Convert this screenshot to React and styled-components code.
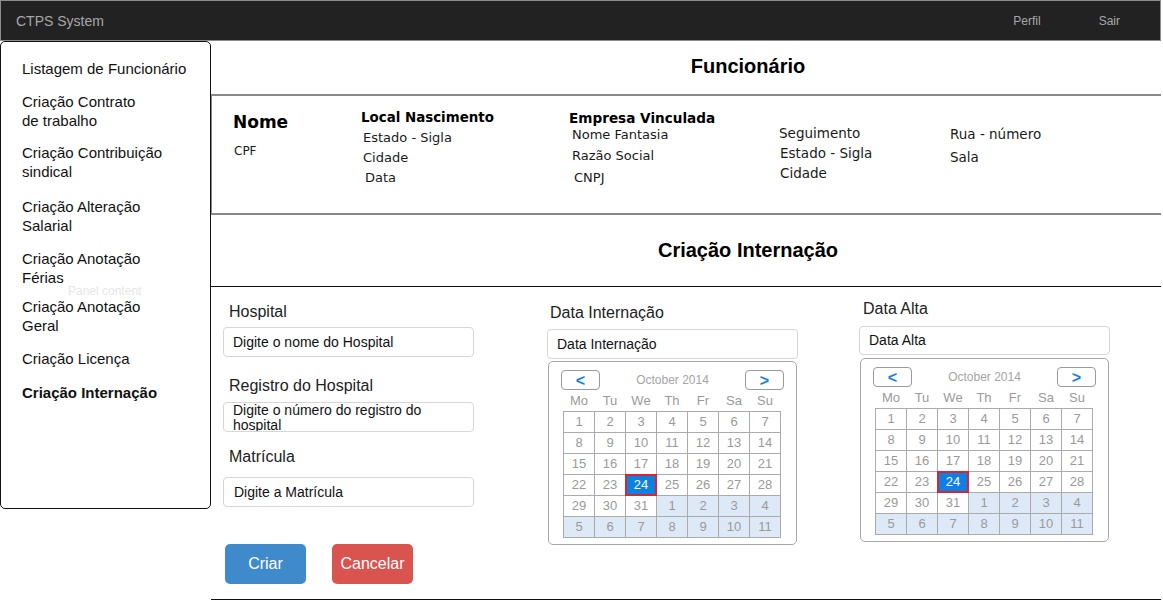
import styled, { createGlobalStyle } from 'styled-components';

const GlobalStyle = createGlobalStyle`
  html, body {
    margin: 0;
    padding: 0;
    background: #fff;
  }
  body {
    font-family: "Liberation Sans", Arial, sans-serif;
    color: #111;
  }
  * {
    box-sizing: border-box;
  }
`;

const menuItems = [
  { lines: ['Listagem de Funcionário'], gap: 0 },
  { lines: ['Criação Contrato', 'de trabalho'], gap: 14 },
  { lines: ['Criação Contribuição', 'sindical'], gap: 13 },
  { lines: ['Criação Alteração', 'Salarial'], gap: 16 },
  { lines: ['Criação Anotação', 'Férias'], gap: 14 },
  { lines: ['Criação Anotação', 'Geral'], gap: 10 },
  { lines: ['Criação Licença'], gap: 14 },
  { lines: ['Criação Internação'], gap: 15, active: true },
];

const buildDays = () => {
  const days = [];
  for (let d = 1; d <= 31; d++) days.push({ day: d, next: false });
  for (let d = 1; d <= 11; d++) days.push({ day: d, next: true });
  return days;
};

const Calendar = ({ mt }) => (
  <CalendarBox $mt={mt}>
    <CalendarHead>
      <NavButton>&lt;</NavButton>
      <MonthLabel>October 2014</MonthLabel>
      <NavButton>&gt;</NavButton>
    </CalendarHead>
    <WeekRow>
      {['Mo', 'Tu', 'We', 'Th', 'Fr', 'Sa', 'Su'].map((w) => (
        <span key={w}>{w}</span>
      ))}
    </WeekRow>
    <DayGrid>
      {buildDays().map((d, i) => (
        <DayCell key={i} $next={d.next} $selected={!d.next && d.day === 24}>
          {d.day}
        </DayCell>
      ))}
    </DayGrid>
  </CalendarBox>
);

const App = () => {
  return (
    <>
      <GlobalStyle />
      <Page>
        <TopBar>
          <Brand>CTPS System</Brand>
          <NavLinks>
            <NavLink>Perfil</NavLink>
            <NavLink>Sair</NavLink>
          </NavLinks>
        </TopBar>
        <Body>
          <Sidebar>
            {menuItems.map((item, i) => (
              <MenuItem key={i} $gap={item.gap} $active={item.active}>
                {item.lines.map((l, j) => (
                  <div key={j}>{l}</div>
                ))}
              </MenuItem>
            ))}
            <GhostText>Panel content</GhostText>
          </Sidebar>
          <Main>
            <SectionTitle $h={53} $pb={3}>Funcionário</SectionTitle>
            <InfoSection>
              <InfoColumn $w={128} $pt={16}>
                <BigName>Nome</BigName>
                <InfoLine $size={12} $mt={9} $pl={1}>CPF</InfoLine>
              </InfoColumn>
              <InfoColumn $w={208} $pt={12}>
                <InfoHeading $size={13.4}>Local Nascimento</InfoHeading>
                <InfoLine $pl={2}>Estado - Sigla</InfoLine>
                <InfoLine $pl={2}>Cidade</InfoLine>
                <InfoLine $pl={4}>Data</InfoLine>
              </InfoColumn>
              <InfoColumn $w={210} $pt={12}>
                <InfoHeading $size={13.6}>Empresa Vinculada</InfoHeading>
                <InfoLine $pl={3} $mt={-3}>Nome Fantasia</InfoLine>
                <InfoLine $pl={3} $mt={1}>Razão Social</InfoLine>
                <InfoLine $pl={5} $mt={2}>CNPJ</InfoLine>
              </InfoColumn>
              <InfoColumn $w={171} $pt={27}>
                <InfoLine $size={13.5}>Seguimento</InfoLine>
                <InfoLine $size={13.5} $pl={1}>Estado - Sigla</InfoLine>
                <InfoLine $size={13.5} $pl={1}>Cidade</InfoLine>
              </InfoColumn>
              <InfoColumn $w={180} $pt={28}>
                <InfoLine $size={13.5}>Rua - número</InfoLine>
                <InfoLine $size={13.5} $mt={3}>Sala</InfoLine>
              </InfoColumn>
            </InfoSection>
            <SectionTitle $h={72} $line>Criação Internação</SectionTitle>
            <FormSection>
              <FormColumn $pt={15}>
                <FieldLabel $mb={6} $pl={6}>Hospital</FieldLabel>
                <TextBox>Digite o nome do Hospital</TextBox>
                <FieldLabel $mt={19} $mb={7} $pl={6}>Registro do Hospital</FieldLabel>
                <TextBox $multi>Digite o número do registro do hospital</TextBox>
                <FieldLabel $mt={15} $mb={11} $pl={6}>Matrícula</FieldLabel>
                <TextBox $pl={10}>Digite a Matrícula</TextBox>
                <ButtonRow>
                  <ActionButton $variant="primary">Criar</ActionButton>
                  <ActionButton $variant="danger">Cancelar</ActionButton>
                </ButtonRow>
              </FormColumn>
              <FormColumn $pt={16}>
                <FieldLabel $mb={7} $pl={3}>Data Internação</FieldLabel>
                <TextBox>Data Internação</TextBox>
                <Calendar mt={2} />
              </FormColumn>
              <FormColumn $pt={12}>
                <FieldLabel $mb={8} $pl={4}>Data Alta</FieldLabel>
                <TextBox $h={29}>Data Alta</TextBox>
                <Calendar mt={3} />
              </FormColumn>
            </FormSection>
          </Main>
        </Body>
      </Page>
    </>
  );
};

export default App;

const Page = styled.div`
  width: 1161px;
  height: 601px;
  overflow: hidden;
`;

const TopBar = styled.header`
  height: 41px;
  display: flex;
  align-items: center;
  padding-left: 15px;
  background: #222;
  border: 1px solid #8c8c8c;
`;

const Brand = styled.span`
  font-size: 14px;
  color: #a8a8a8;
`;

const NavLinks = styled.nav`
  margin-left: auto;
  display: flex;
  gap: 58px;
  padding-right: 40px;
`;

const NavLink = styled.span`
  font-size: 12px;
  color: #a8a8a8;
`;

const Body = styled.div`
  display: flex;
  align-items: flex-start;
`;

const Sidebar = styled.aside`
  position: relative;
  flex-shrink: 0;
  width: 211px;
  height: 468px;
  padding: 17px 0 0 21px;
  border: 1px solid #111;
  border-radius: 5px;
  background: #fff;
`;

const MenuItem = styled.div`
  margin-top: ${({ $gap }) => $gap}px;
  font-size: 15px;
  line-height: 19px;
  color: #111;
  font-weight: ${({ $active }) => ($active ? 700 : 400)};
`;

const GhostText = styled.span`
  position: absolute;
  left: 67px;
  top: 242px;
  font-size: 12px;
  color: #e6e6e6;
`;

const Main = styled.main`
  width: 950px;
`;

const SectionTitle = styled.h2`
  margin: 0;
  height: ${({ $h }) => $h}px;
  display: flex;
  align-items: center;
  justify-content: center;
  padding: 0 0 ${({ $pb = 0 }) => $pb}px 124px;
  font-size: 20px;
  font-weight: 700;
  color: #000;
  border-bottom: ${({ $line }) => ($line ? '1px solid #111' : 'none')};
`;

const InfoSection = styled.section`
  height: 121px;
  display: flex;
  padding-left: 21px;
  border-top: 2px solid #888;
  border-bottom: 2px solid #888;
  border-left: 1px solid #888;
  font-family: "DejaVu Sans", Verdana, sans-serif;
  color: #1a1a1a;
`;

const InfoColumn = styled.div`
  width: ${({ $w }) => $w}px;
  flex-shrink: 0;
  padding-top: ${({ $pt }) => $pt}px;
`;

const BigName = styled.div`
  font-size: 17px;
  font-weight: 700;
  line-height: 20px;
  color: #000;
`;

const InfoHeading = styled.div`
  font-size: ${({ $size }) => $size}px;
  font-weight: 700;
  line-height: 20px;
  color: #000;
`;

const InfoLine = styled.div`
  font-size: ${({ $size = 13 }) => $size}px;
  line-height: 20px;
  margin-top: ${({ $mt = 0 }) => $mt}px;
  padding-left: ${({ $pl = 0 }) => $pl}px;
`;

const FormSection = styled.section`
  height: 313px;
  display: grid;
  grid-template-columns: 324px 312px 251px;
  align-items: start;
  padding-left: 12px;
  border-bottom: 1px solid #111;
`;

const FormColumn = styled.div`
  padding-top: ${({ $pt }) => $pt}px;
`;

const FieldLabel = styled.div`
  margin-top: ${({ $mt = 0 }) => $mt}px;
  margin-bottom: ${({ $mb = 0 }) => $mb}px;
  padding-left: ${({ $pl = 0 }) => $pl}px;
  font-size: 16px;
  line-height: 19px;
  color: #222;
`;

const TextBox = styled.div`
  width: 251px;
  height: ${({ $h = 30 }) => $h}px;
  padding: 0 9px 0 ${({ $pl = 9 }) => $pl}px;
  border: 1px solid #d6d6d6;
  border-radius: 4px;
  font-size: 14px;
  line-height: ${({ $multi, $h = 30 }) => ($multi ? '15px' : `${$h - 2}px`)};
  color: #111;
  overflow: hidden;
  white-space: ${({ $multi }) => ($multi ? 'normal' : 'nowrap')};
`;

const ButtonRow = styled.div`
  display: flex;
  gap: 26px;
  margin: 37px 0 0 2px;
`;

const ActionButton = styled.button`
  width: 81px;
  height: 40px;
  border: none;
  border-radius: 5px;
  font-family: "Liberation Sans", Arial, sans-serif;
  font-size: 16px;
  color: #fff;
  background: ${({ $variant }) => ($variant === 'danger' ? '#d9534f' : '#3f8acb')};
`;

const CalendarBox = styled.div`
  width: 249px;
  height: 184px;
  margin: ${({ $mt = 2 }) => $mt}px 0 0 1px;
  padding: 8px 12px 0 12px;
  border: 1px solid #a8a8a8;
  border-radius: 5px;
`;

const CalendarHead = styled.div`
  height: 20px;
  display: flex;
  align-items: center;
  justify-content: space-between;
`;

const NavButton = styled.button`
  width: 39px;
  height: 20px;
  padding: 0;
  border: 1px solid #9a9a9a;
  border-radius: 4px;
  background: #fff;
  font-family: "Liberation Sans", Arial, sans-serif;
  font-size: 16px;
  font-weight: 700;
  line-height: 17px;
  color: #1a7fdc;
`;

const MonthLabel = styled.span`
  font-size: 12px;
  color: #a5a5a5;
`;

const WeekRow = styled.div`
  display: grid;
  grid-template-columns: repeat(7, 30px);
  column-gap: 1px;
  width: 218px;
  height: 21px;
  margin-left: 2px;
  padding: 0 1px;
  align-items: center;
  text-align: center;
  font-size: 13px;
  color: #9a9a9a;
`;

const DayGrid = styled.div`
  display: grid;
  grid-template-columns: repeat(7, 30px);
  grid-auto-rows: 20px;
  gap: 1px;
  width: 218px;
  margin-left: 2px;
  padding: 1px;
  background: #ababab;
`;

const DayCell = styled.div`
  position: relative;
  text-align: center;
  font-size: 13px;
  line-height: 20px;
  color: ${({ $selected }) => ($selected ? '#fff' : '#9a9a9a')};
  background: ${({ $selected, $next }) => ($selected ? '#0d80e6' : $next ? '#dde9f7' : '#fff')};
  outline: ${({ $selected }) => ($selected ? '2px solid #d6262e' : 'none')};
  outline-offset: -1px;
  z-index: ${({ $selected }) => ($selected ? 1 : 0)};
`;
